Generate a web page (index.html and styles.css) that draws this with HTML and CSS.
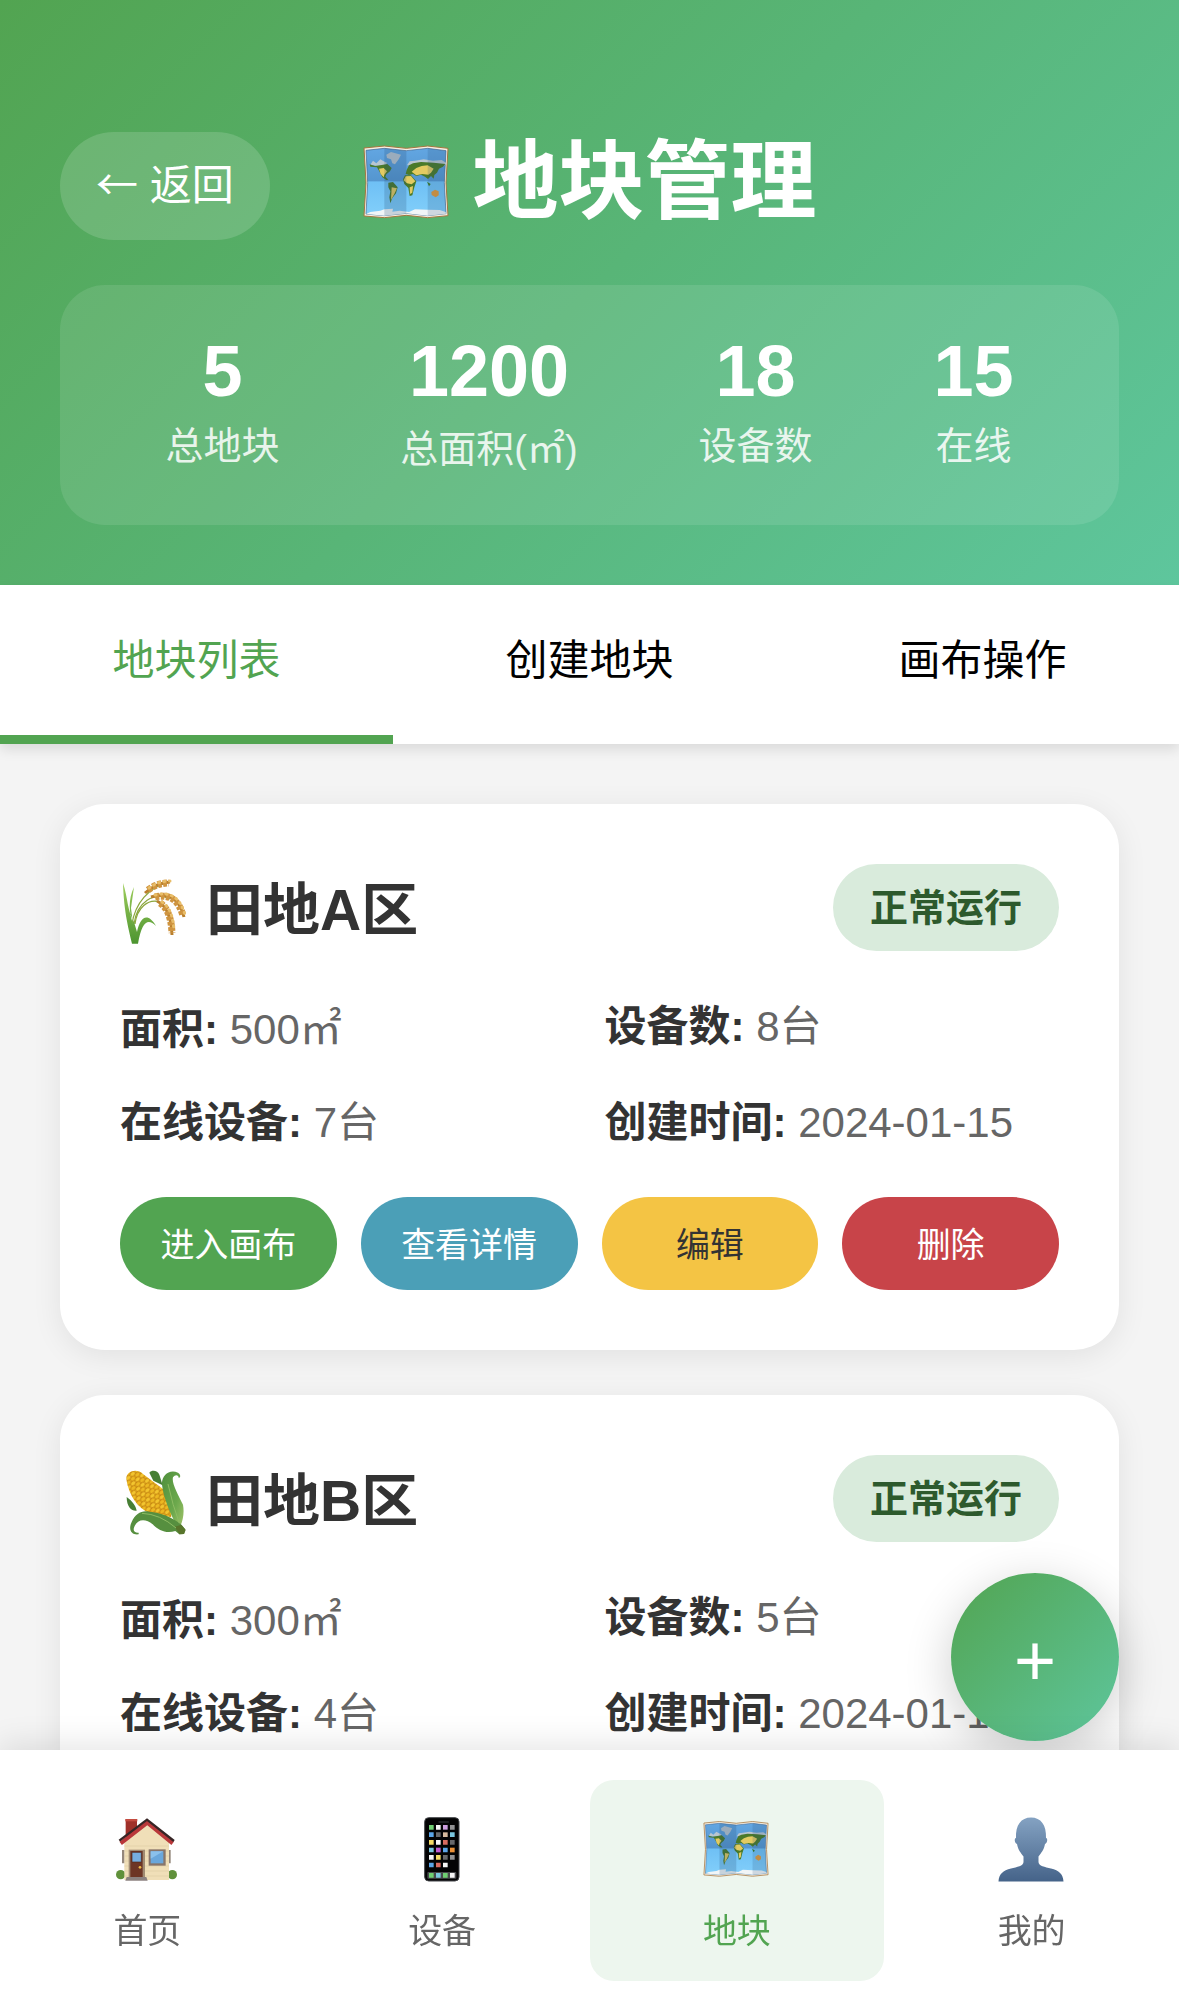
FILE: index.html
```html
<!DOCTYPE html>
<html lang="zh-CN">
<head>
<meta charset="utf-8">
<meta name="viewport" content="width=device-width, initial-scale=1">
<title>地块管理</title>
<link rel="stylesheet" href="styles.css">
</head>
<body>
<svg class="sprite" aria-hidden="true">
  <defs>
    <linearGradient id="sea" x1="0" y1="0" x2="0" y2="1">
      <stop offset="0" stop-color="#62a6e2"/><stop offset=".48" stop-color="#5596cf"/>
      <stop offset=".5" stop-color="#6fc0f5"/><stop offset="1" stop-color="#82cffa"/>
    </linearGradient>
    <linearGradient id="person" x1="0" y1="0" x2="0" y2="1">
      <stop offset="0" stop-color="#84a2c2"/><stop offset="1" stop-color="#456389"/>
    </linearGradient>
    <linearGradient id="husk" x1="0" y1="0" x2="1" y2="1">
      <stop offset="0" stop-color="#4f8f3c"/><stop offset=".6" stop-color="#6ba84c"/><stop offset="1" stop-color="#a3c46c"/>
    </linearGradient>
    <linearGradient id="leaf" x1="0" y1="0" x2="0" y2="1">
      <stop offset="0" stop-color="#9fce5c"/><stop offset="1" stop-color="#4c9430"/>
    </linearGradient>
    <pattern id="kernels" width="18" height="22" patternUnits="userSpaceOnUse" patternTransform="rotate(-42)">
      <rect width="18" height="22" fill="#c98a12"/>
      <ellipse cx="9" cy="5" rx="8" ry="5" fill="#f3c62f"/>
      <ellipse cx="0" cy="16" rx="8" ry="5" fill="#edb922"/>
      <ellipse cx="18" cy="16" rx="8" ry="5" fill="#edb922"/>
    </pattern>
  </defs>
  <symbol id="i-map" viewBox="40 38 258 220">
    <path d="M43 46 104 40 170 47 234 40 295 47 289 150 295 249 234 255 170 248 104 255 43 250 49 150Z" fill="#f7efe2" stroke="#a5763f" stroke-width="3" stroke-linejoin="round"/>
    <path d="M49 53 104 47 170 54 234 47 289 54 284 150 289 243 234 249 170 242 104 249 49 244 54 150Z" fill="url(#sea)" stroke="#40638c" stroke-width="2"/>
    <g fill="#b9c6d0"><path d="M110 66 124 58 154 66 147 80 136 95 128 92 124 80 112 76Z"/><path d="M62 96 70 84 80 92 92 80 102 86 112 90 108 98 82 100Z"/><path d="M172 98 180 86 196 84 222 80 250 84 276 82 291 92 286 98 240 94 200 98Z"/></g>
    <g fill="#4a7a2a"><path d="M60 95 76 100 96 97 113 94 126 106 121 116 110 125 107 132 116 141 110 142 98 134 90 118 82 104 62 102Z"/><path d="M171 112 178 98 190 92 214 88 252 90 287 94 280 102 268 108 262 120 254 127 252 138 244 130 235 139 226 132 214 126 200 130 190 124 178 127 168 124Z"/><path d="M116 150 130 148 144 164 139 182 128 196 122 212 119 194 122 176 116 164Z"/><path d="M160 140 166 128 184 128 200 146 194 164 188 188 180 190 176 166 164 154Z"/></g>
    <g fill="#e3cb62"><path d="M88 108 102 106 112 116 104 126 102 134 93 124Z"/><path d="M162 143 168 131 184 130 197 146 186 155 172 152Z"/><path d="M186 117 200 106 216 100 234 98 252 108 244 120 236 126 218 124 200 128Z"/><path d="M126 164 142 167 134 184 124 202Z"/><path d="M180 164 190 160 188 180 181 184Z"/></g>
    <path d="M232 147 243 154 238 161Z" fill="#3b7a24"/><path d="M245 178 256 171 267 176 267 188 258 194 246 187Z" fill="#e29a3a"/>
    <path d="M49 244 62 238 92 234 104 230 130 228 128 237 150 234 178 238 196 230 234 231 270 232 288 238 289 243 234 249 170 242 104 249Z" fill="#f1f5f7"/>
    <path d="M104 47 170 54V242L104 249Z" fill="#24476f" opacity=".2"/><path d="M234 47 289 54 284 150 289 243 234 249Z" fill="#24476f" opacity=".17"/>
  </symbol>
  <symbol id="i-rice" viewBox="0 0 72 72">
    <g fill="none" stroke="#8aa63c" stroke-width="1.2"><path d="M12 50C15 30 28 13 50 8"/><path d="M14 50C17 28 34 17 50 25"/><path d="M15 50C17 34 28 24 40 28"/></g>
    <path d="M3 9C8 24 7 36 14 48L17 58C20 44 27 37 36 52 28 44 22 47 18 69.700H12C9 56 4 40 3 9ZM14 13C8 26 9 38 13 50L11 34Z" fill="url(#leaf)"/>
    <g fill="none">
      <g stroke="#b97f2c" stroke-width="3"><path d="M25 19Q36 9 50 8"/><path d="M31 23Q57 15 64 43"/><path d="M37 27Q51 34 52 61"/></g>
      <g stroke="#cf9440" stroke-width="7" stroke-dasharray="4 1.500"><path d="M28 16Q37 9 49 9"/><path d="M35 23Q57 18 63 42"/><path d="M40 29Q51 36 52 59"/></g>
      <g stroke="#e8bd68" stroke-width="3" stroke-linecap="round" stroke-dasharray="1 4.500"><path d="M29 14Q38 7 50 7"/><path d="M35 21Q58 15 65 41"/><path d="M42 28Q53 35 54 57"/></g>
    </g>
  </symbol>
  <symbol id="i-corn" viewBox="60 69 216 216">
    <path d="M148 92C156 82 174 86 178 98L188 130 160 116ZM80 165C96 176 108 192 110 206 96 208 80 196 80 165Z" fill="#477f35"/>
    <path d="M79 112C77 88 110 78 128 95L188 140 212 180 214 226 150 214C112 200 86 158 79 112Z" fill="url(#kernels)"/>
    <path d="M186 128C184 100 208 80 234 92 242 97 243 106 236 108 237 98 225 96 219 106 214 122 234 158 249 188 254 214 248 244 236 260 218 232 190 168 186 128Z" fill="url(#husk)"/>
    <path d="M116 277C94 280 84 262 95 240 106 214 126 204 148 209 182 212 214 224 242 246L256 262 252 276 238 277 226 267C200 276 176 266 158 247 138 230 114 230 104 252 97 265 103 273 116 272Z" fill="#568f3f"/>
    <path d="M224 254 244 248 257 264 252 276 238 277Z" fill="#58752c"/>
    <path d="M126 214Q180 216 228 258M204 126Q218 190 238 244" fill="none" stroke="#8dbc63" stroke-width="3"/>
  </symbol>
  <symbol id="i-house" viewBox="93 69 216 216">
    <circle cx="122" cy="254" r="14" fill="#60913b"/><circle cx="277" cy="254" r="14" fill="#60913b"/>
    <path d="M137 88h34v50l-34 24Z" fill="#9f3029"/><path d="M136 87h36v7h-36Z" fill="#c44b40"/>
    <path d="M126 180h8v40h-8ZM264 180h8v40h-8Z" fill="#94877c"/>
    <path d="M133 152 202 100 267 152V270H133Z" fill="#f0dfb8"/>
    <path d="M133 168H267M133 183H267M133 198H267M133 213H267M133 228H267M133 243H267M133 258H267" stroke="#dbc79d" stroke-width="1.500"/>
    <path d="M122 160 202 98 278 160" fill="none" stroke="#b9383a" stroke-width="12"/>
    <path d="M118 152 201 89 282 153" fill="none" stroke="#362525" stroke-width="7"/>
    <path d="M146 179h49v84h-49Z" fill="#a18c73"/><path d="M151 183h37v78h-37Z" fill="#6d3525"/><path d="M156 187h28v29h-28Z" fill="#76aee0" stroke="#4c281f" stroke-width="2"/><circle cx="180" cy="232" r="4" fill="#edb949"/>
    <path d="M206 178h51v49h-51Z" fill="#88756a"/><path d="M212 184h38v36h-38Z" fill="#6aa7dc"/><path d="M212 184h38l-38 22Z" fill="#8bc1ec"/>
    <path d="M140 261h59l4 11h-67Z" fill="#8c8280"/>
  </symbol>
  <symbol id="i-phone" viewBox="976 69 216 216">
    <rect x="1032" y="83" width="103" height="190" rx="12" fill="#030304" stroke="#44464a" stroke-width="3"/>
    <rect x="1040" y="246" width="87" height="20" rx="3" fill="#48494c"/>
    <path d="M1075 96h28" stroke="#292a2e" stroke-width="4" stroke-linecap="round"/>
    <g fill="none" stroke-width="14">
      <path stroke="#6fcf72" d="M1045 112h14M1045 256h14M1087 256h14"/>
      <path stroke="#f6f6f6" d="M1066 112h14M1066 157h14M1045 202h14M1087 225h14M1108 256h14"/>
      <path stroke="#cd9ee0" d="M1087 112h14"/><path stroke="#919193" d="M1108 112h14M1108 202h14"/>
      <path stroke="#5ba5e8" d="M1045 134h14M1087 180h14M1045 225h14"/><path stroke="#67686b" d="M1066 134h14M1108 157h14M1087 202h14"/>
      <path stroke="#d6b99d" d="M1087 134h14"/><path stroke="#7bc7df" d="M1108 134h14M1045 180h14M1066 256h14"/>
      <path stroke="#f5dc65" d="M1045 157h14M1066 202h14"/><path stroke="#d86b61" d="M1087 157h14M1066 225h14"/>
      <path stroke="#c15bd1" d="M1066 180h14"/><path stroke="#ea9139" d="M1108 180h14"/>
    </g>
  </symbol>
  <symbol id="i-person" viewBox="0 0 72 72">
    <path d="M35 4.500C25 4.500 19.500 12 20 25 18 25 18.500 30 21 31 22 37 25 40 27.500 43.500V49C27.500 53 21 54 15 55.500 7 57.500 3 61 2.500 68.500H67.500C67 61 63 57.500 55 55.500 49 54 42.500 53 42.500 49V43.500C45 40 48 37 49 31 51.500 30 52 25 50 25 50.500 12 45 4.500 35 4.500Z" fill="url(#person)"/>
  </symbol>
</svg>

<header class="header">
  <div class="header-bar">
    <button class="back" type="button"><span class="arrow">←</span> 返回</button>
    <h1 class="title"><svg class="title-icon" aria-hidden="true"><use href="#i-map"/></svg>地块管理</h1>
  </div>
  <dl class="stats">
    <div class="stat"><dd class="stat-value">5</dd><dt class="stat-label">总地块</dt></div>
    <div class="stat"><dd class="stat-value">1200</dd><dt class="stat-label stat-area">总面积(㎡)</dt></div>
    <div class="stat"><dd class="stat-value">18</dd><dt class="stat-label">设备数</dt></div>
    <div class="stat"><dd class="stat-value">15</dd><dt class="stat-label">在线</dt></div>
  </dl>
</header>

<div class="tabs">
  <button class="tab tab-active" type="button">地块列表</button>
  <button class="tab" type="button">创建地块</button>
  <button class="tab" type="button">画布操作</button>
</div>

<main class="plots">
  <article class="card">
    <div class="card-head">
      <h2 class="card-title"><svg class="emoji" aria-hidden="true"><use href="#i-rice"/></svg>田地A区</h2>
      <span class="badge">正常运行</span>
    </div>
    <div class="info">
      <p class="info-item info-area"><strong>面积:</strong> 500㎡</p>
      <p class="info-item"><strong>设备数:</strong> 8台</p>
      <p class="info-item"><strong>在线设备:</strong> 7台</p>
      <p class="info-item"><strong>创建时间:</strong> 2024-01-15</p>
    </div>
    <div class="actions">
      <button class="action action-enter" type="button">进入画布</button>
      <button class="action action-view" type="button">查看详情</button>
      <button class="action action-edit" type="button">编辑</button>
      <button class="action action-delete" type="button">删除</button>
    </div>
  </article>
  <article class="card">
    <div class="card-head">
      <h2 class="card-title"><svg class="emoji" aria-hidden="true"><use href="#i-corn"/></svg>田地B区</h2>
      <span class="badge">正常运行</span>
    </div>
    <div class="info">
      <p class="info-item info-area"><strong>面积:</strong> 300㎡</p>
      <p class="info-item"><strong>设备数:</strong> 5台</p>
      <p class="info-item"><strong>在线设备:</strong> 4台</p>
      <p class="info-item"><strong>创建时间:</strong> 2024-01-10</p>
    </div>
  </article>
</main>

<button class="fab" type="button">+</button>

<nav class="nav">
  <a class="nav-item" href="#home"><svg class="emoji" aria-hidden="true"><use href="#i-house"/></svg>首页</a>
  <a class="nav-item" href="#devices"><svg class="emoji" aria-hidden="true"><use href="#i-phone"/></svg>设备</a>
  <a class="nav-item nav-active" href="#plots"><svg class="emoji" viewBox="0 0 72 72" aria-hidden="true"><use href="#i-map" x="2" y="8" width="66" height="56"/></svg>地块</a>
  <a class="nav-item" href="#me"><svg class="emoji" aria-hidden="true"><use href="#i-person"/></svg>我的</a>
</nav>
</body>
</html>
```
FILE: styles.css
```css
:root {
  --green: #52a451;
  --teal: #5ec69d;
  --gradient: linear-gradient(135deg, var(--green), var(--teal));
}

* {
  box-sizing: border-box;
  margin: 0;
  padding: 0;
}

body {
  background: #f4f4f4;
  color: #333;
  font-family: "Liberation Sans", "Noto Sans CJK SC", sans-serif;
  font-size: 42px;
}

button {
  border: 0;
  font: inherit;
  cursor: pointer;
}

.sprite {
  position: absolute;
  width: 0;
  height: 0;
}

.emoji {
  flex: none;
  width: 72px;
  height: 72px;
}

.header {
  padding: 132px 60px 60px;
  background: var(--gradient);
  color: #fff;
}

.header-bar {
  display: grid;
  grid-template-columns: 1fr auto 1fr;
  align-items: start;
  margin-bottom: 45px;
}

.back {
  justify-self: start;
  padding: 0 36px;
  border-radius: 60px;
  background: rgba(255, 255, 255, 0.15);
  color: #fff;
  line-height: 108px;
}

.arrow {
  font-family: "Noto Sans CJK SC", sans-serif;
  line-height: 1;
}

.title {
  display: flex;
  align-items: center;
  gap: 24px;
  font-size: 86px;
  line-height: 100px;
}

.title-icon {
  width: 86px;
  height: 74px;
}

.stats {
  display: flex;
  justify-content: space-around;
  padding: 45px 45px 39px;
  border-radius: 45px;
  background: rgba(255, 255, 255, 0.1);
  text-align: center;
}

.stat-value {
  font-size: 72px;
  font-weight: 700;
  line-height: 82px;
}

.stat-label {
  font-size: 38px;
  line-height: 68px;
  opacity: 0.85;
}

.stat-area {
  line-height: 74px;
}

.tabs {
  display: flex;
  background: #fff;
  box-shadow: 0 6px 12px rgba(0, 0, 0, 0.1);
}

.tab {
  flex: 1;
  padding: 46px 0 44px;
  border-bottom: 9px solid transparent;
  background: none;
  color: #000;
  line-height: 60px;
}

.tab-active {
  border-bottom-color: var(--green);
  color: var(--green);
}

.plots {
  display: grid;
  gap: 45px;
  padding: 60px 60px 200px;
}

.card {
  padding: 60px;
  border-radius: 45px;
  background: #fff;
  box-shadow: 0 6px 30px rgba(0, 0, 0, 0.08);
}

.card-head {
  display: flex;
  align-items: center;
  justify-content: space-between;
  margin-bottom: 45px;
}

.card-title {
  display: flex;
  align-items: center;
  gap: 14px;
  padding-top: 4px;
  font-size: 57px;
  line-height: 72px;
}

.badge {
  padding: 2px 37px 0;
  border-radius: 45px;
  background: #d9ebdc;
  color: #2d5a2d;
  font-size: 38px;
  font-weight: 700;
  line-height: 85px;
}

.info {
  display: grid;
  grid-template-columns: 1fr 1fr;
  gap: 30px;
}

.info-item {
  padding-top: 2px;
  color: #666;
  line-height: 58px;
}

.info-area {
  line-height: 64px;
}

.info-item strong {
  color: #333;
}

.actions {
  display: grid;
  grid-template-columns: repeat(4, 1fr);
  gap: 24px;
  margin-top: 45px;
}

.action {
  padding-top: 3px;
  border-radius: 48px;
  color: #fff;
  font-size: 34px;
  line-height: 90px;
}

.action-enter {
  background: var(--green);
}

.action-view {
  background: #4b9fb7;
}

.action-edit {
  background: #f4c444;
  color: #333;
}

.action-delete {
  background: #c84449;
}

.fab {
  position: fixed;
  right: 60px;
  bottom: 263px;
  width: 168px;
  height: 168px;
  padding-top: 6px;
  border-radius: 50%;
  background: var(--gradient);
  box-shadow: 0 12px 48px rgba(0, 0, 0, 0.2);
  color: #fff;
  font-size: 72px;
}

.nav {
  position: fixed;
  right: 0;
  bottom: 0;
  left: 0;
  display: flex;
  padding: 30px 0 23px;
  background: #fff;
  box-shadow: 0 -6px 30px rgba(0, 0, 0, 0.1);
}

.nav-item {
  flex: 1;
  display: flex;
  flex-direction: column;
  align-items: center;
  gap: 16px;
  padding: 33px 0 20px;
  border-radius: 24px;
  color: #666;
  font-size: 34px;
  line-height: 60px;
  text-decoration: none;
}

.nav-active {
  background: #edf6ee;
  color: var(--green);
}
```
